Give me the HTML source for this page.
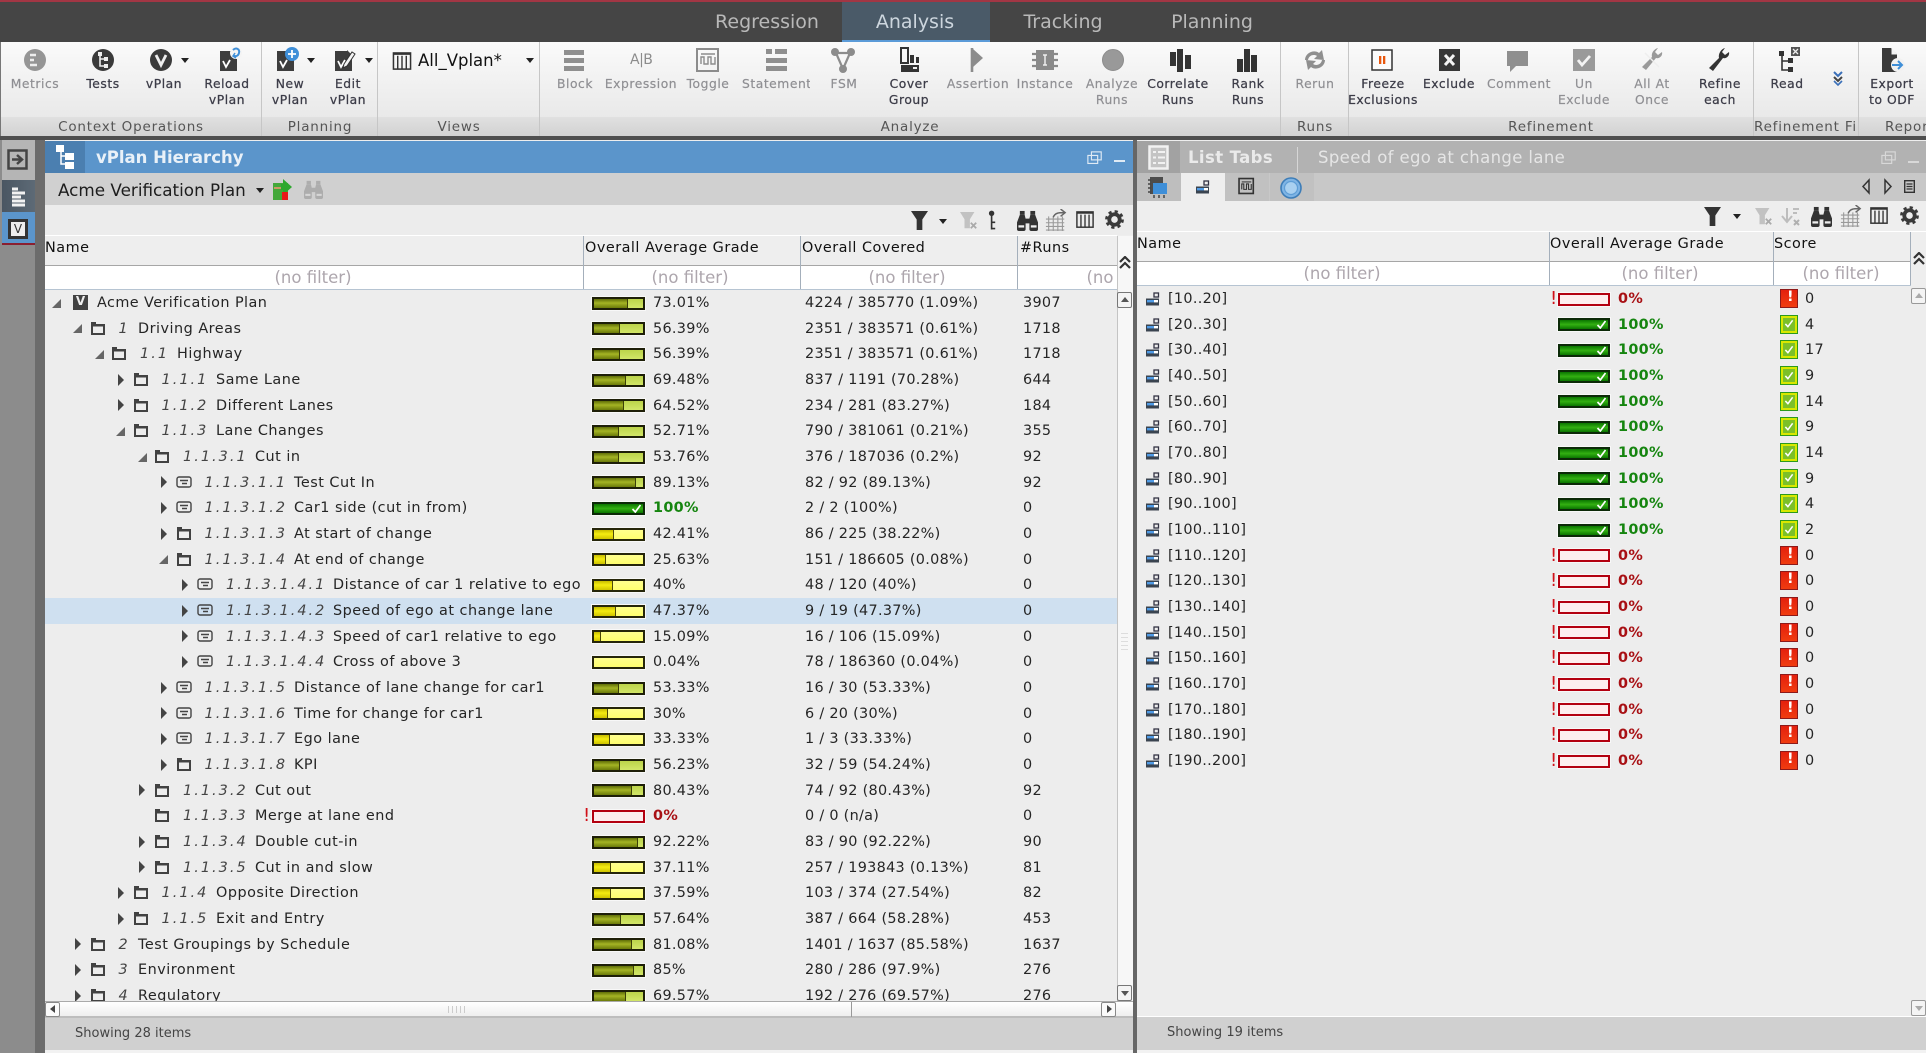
<!DOCTYPE html>
<html lang="en"><head><meta charset="utf-8"><title>vPlan Hierarchy</title>
<style>
html,body{margin:0;padding:0;width:1926px;height:1053px;overflow:hidden;background:#eee}
body{position:relative;font-family:"DejaVu Sans","Liberation Sans",sans-serif;color:#222}
div,span,p,em,b,i,svg{position:absolute}
p{margin:0}
svg{overflow:visible}
#app{left:0;top:0;width:1926px;height:1053px;overflow:hidden;filter:blur(.35px)}
.tab{top:1px;height:42px;line-height:42px;font-size:19px;color:#b9b9b9;transform:translateX(-50%);white-space:nowrap}
.t{top:76px;font-size:12.3px;letter-spacing:.55px;line-height:16.3px;color:#3c3c48;text-align:center;transform:translateX(-50%);white-space:nowrap;font-weight:400;-webkit-text-stroke:.25px #3c3c48}
.g{color:#8f8f93;-webkit-text-stroke:.2px #8f8f93}
.lb{top:118px;height:19px;line-height:19px;font-size:13.5px;letter-spacing:.8px;color:#555;white-space:nowrap;transform:translateX(-50%)}
.sp{top:42px;width:1px;height:94px;background:#c6c6c6}
.ic{top:46px;width:28px;height:28px}
.car{width:0;height:0;border-left:4px solid transparent;border-right:4px solid transparent;border-top:5px solid #222}
.hd{font-size:14.4px;letter-spacing:.5px;color:#111;white-space:nowrap;line-height:20px}
.fl{font-size:16.5px;color:#ada6ad;white-space:nowrap;transform:translateX(-50%);line-height:22px}
.vl{width:1px;background:#a4afbb}
.r{left:0;width:1920px;height:25.67px;top:calc(var(--i)*25.67px);font-size:14.4px;letter-spacing:.3px;line-height:25.67px;white-space:nowrap;color:#252525}
.r span,.r em{top:1px}
.r em{left:calc(97px + var(--l)*21.5px);font-style:italic;color:#444;letter-spacing:2.05px}
.r .n{left:calc(99px + var(--l)*39px);letter-spacing:.5px}
.c{left:calc(53.5px + var(--l)*21.4px);top:6.5px;width:0;height:0;border-left:6px solid #444;border-top:6.5px solid transparent;border-bottom:6.5px solid transparent}
.x{left:calc(52px + var(--l)*21.4px);top:8.5px;width:0;height:0;border-right:9px solid #666;border-top:9px solid transparent}
.f{left:calc(68px + var(--l)*21.5px);top:5px;width:16px;height:15px}
.b{left:592px;top:6.5px;width:53px;height:13px;box-sizing:border-box;border:2px solid #1e1f08;background:linear-gradient(#bcd44a,#d2e668);box-shadow:0 0 0 1px #f8f8f8;overflow:hidden}
.b u{position:absolute;left:0;top:0;display:block;height:100%;box-sizing:border-box;border-right:1.5px solid #3b3f08;background:linear-gradient(#606e08,#a4b424 45%,#6b7a0a)}
.b.y{border-color:#26260a;background:linear-gradient(#ffff8e,#ffff70)}
.b.y u{border-right-color:#4b4808;background:linear-gradient(#c8bc00,#f4ec10 45%,#cfc400)}
.b.gr{background:linear-gradient(#0a7600,#33b012 50%,#0a7600);border-color:#0c2a08}
.b.rd{background:#fdeeee;border-color:#b30010}
.b svg{right:1px;top:-1px;width:11px;height:11px}
.pc{left:653px}.ct{left:805px}.ru{left:1023px}
.gt{color:#15850f;font-weight:700}.rt{color:#a81014;font-weight:700}
.r .ex{color:#d01018;font-weight:400;font-size:18px;top:0}
.b.rb{left:1558px;width:52px}
.sc{left:1780px;top:3px;width:18px;height:19px;box-sizing:border-box}
.sr{background:linear-gradient(#e4200e,#f03c10);border:1.5px solid #8d1a1a}
.sg{background:#d8e800;border:1.5px solid #2c9a1c}
.sg:after{content:"";position:absolute;left:2px;top:2px;right:2px;bottom:2px;background:#7cc028}
.sc svg{left:2.5px;top:2.5px;width:10px;height:11px;z-index:2}
</style></head><body>
<svg width="0" height="0" style="position:absolute;left:0;top:0">
<defs>
<symbol id="fo" viewBox="0 0 16 15"><path d="M1 3V1h5v2h9v11H1z M3 5.5v6.5h10V5.5z" fill="#424242" fill-rule="evenodd"/></symbol>
<symbol id="te" viewBox="0 0 16 15"><rect x="1" y="2" width="14" height="10" rx="2" fill="none" stroke="#444" stroke-width="1.4"/><path d="M4 5.5h8M6 8.5h5" stroke="#444" stroke-width="1.4"/></symbol>
<symbol id="ck" viewBox="0 0 11 11"><path d="M1.5 6l2.8 3L9.5 2" fill="none" stroke="#fff" stroke-width="1.7"/></symbol>
<symbol id="rg" viewBox="0 0 14 14"><rect x="8" y="1" width="4.5" height="4" fill="none" stroke="#334" stroke-width="1.3"/><rect x="0" y="6.5" width="13" height="7" fill="#3a4450"/><rect x="1" y="8" width="7" height="2.4" fill="#4f9be6"/><rect x="8" y="8" width="4" height="2.4" fill="#fff"/></symbol>
<symbol id="fun" viewBox="0 0 18 20"><path d="M0 0h18l-6 9v11H6V9z" fill="#333"/></symbol>
<symbol id="funx" viewBox="0 0 20 20"><path d="M0 0h16l-5 8v10H5V8z" fill="#c2c2c2"/><path d="M12 12l6 6M18 12l-6 6" stroke="#aaa" stroke-width="2"/></symbol>
<symbol id="pin" viewBox="0 0 10 22"><circle cx="4" cy="3" r="3" fill="#333"/><path d="M4 3v18M4 13h4M4 20h4" stroke="#333" stroke-width="1.8" fill="none"/></symbol>
<symbol id="bin" viewBox="0 0 22 22"><rect x="3" y="1" width="5" height="4" fill="#333"/><rect x="14" y="1" width="5" height="4" fill="#333"/><path d="M3 5h5l1 4v11a2 2 0 0 1-2 2H2a2 2 0 0 1-2-2v-7zM14 5h5l3 8v7a2 2 0 0 1-2 2h-5a2 2 0 0 1-2-2V9zM9 9h4v5H9z" fill="#333"/><rect x="1.500" y="16" width="6" height="2.400" fill="#eee"/><rect x="14.500" y="16" width="6" height="2.400" fill="#eee"/></symbol>
<symbol id="grd" viewBox="0 0 24 24"><path d="M4 8v16M9 8v16M14 8v16M19 8v16M1 11h20M1 15h20M1 19h20M1 23h20" stroke="#9a9a9a" stroke-width="1.2" fill="none"/><path d="M9 9c2-5 6-5 12-5M17 0l5 4-5 4" stroke="#666" stroke-width="1.6" fill="none"/></symbol>
<symbol id="col" viewBox="0 0 20 20"><rect x="1" y="1" width="18" height="17" fill="none" stroke="#333" stroke-width="1.6"/><path d="M1 2h18" stroke="#333" stroke-width="2"/><path d="M5.500 4v14M10 4v14M14.500 4v14" stroke="#333" stroke-width="1.500"/></symbol>
<symbol id="gear" viewBox="0 0 20 20"><circle cx="10" cy="10" r="5.500" fill="none" stroke="#3a3a3a" stroke-width="4"/><circle cx="10" cy="10" r="8.300" fill="none" stroke="#3a3a3a" stroke-width="3.200" stroke-dasharray="3.300 3.200"/></symbol>
<symbol id="win" viewBox="0 0 18 18"><rect x="5" y="1" width="11" height="9" fill="none" stroke="currentColor" stroke-width="1.300"/><rect x="1" y="5" width="11" height="9" fill="none" stroke="currentColor" stroke-width="1.300"/></symbol>
<symbol id="dbl" viewBox="0 0 12 14"><path d="M1 6l5-5 5 5M1 12l5-5 5 5" fill="none" stroke="#333" stroke-width="2.200"/></symbol>
<symbol id="doc" viewBox="0 0 28 28"><path d="M5 5h12v-1l5 5v16H5z" fill="#3d3d3d"/><path d="M8 15l3 6 4-7" fill="none" stroke="#fff" stroke-width="1.800"/></symbol>
</defs></svg>
<div id="app">
<!-- top bar -->
<div style="left:0;top:0;width:1926px;height:42px;background:#454545"></div>
<div style="left:0;top:0;width:1926px;height:2px;background:#a23644"></div>
<div style="left:842px;top:2px;width:148px;height:38px;background:#4a5a68"></div>
<div style="left:842px;top:40px;width:148px;height:2px;background:#5b9bd8"></div>
<span class="tab" style="left:767px">Regression</span>
<span class="tab" style="left:915px;color:#cdd6de">Analysis</span>
<span class="tab" style="left:1063px">Tracking</span>
<span class="tab" style="left:1212px">Planning</span>
<!-- ribbon -->
<div style="left:0;top:42px;width:1926px;height:75px;background:linear-gradient(#fafafa,#e9e9e9)"></div>
<div style="left:0;top:117px;width:1926px;height:19px;background:linear-gradient(#e0e0e0,#d2d2d2)"></div>
<div style="left:0;top:136px;width:1926px;height:4px;background:#4f4f4f"></div>
<div style="left:0;top:42px;width:1px;height:94px;background:#777"></div>
<div class="sp" style="left:261px"></div><div class="sp" style="left:377px"></div><div class="sp" style="left:539px"></div><div class="sp" style="left:1280px"></div><div class="sp" style="left:1348px"></div><div class="sp" style="left:1753px"></div><div class="sp" style="left:1858px"></div>
<!-- ribbon icons -->
<svg class="ic" style="left:21px" viewBox="0 0 28 28"><circle cx="14" cy="14" r="11" fill="#959595"/><path d="M9 9h6M9 14h4M9 19h7" stroke="#eee" stroke-width="2.600"/></svg>
<svg class="ic" style="left:89px" viewBox="0 0 28 28"><circle cx="14" cy="14" r="11" fill="#3a3a3a"/><path d="M11 7v13h7M11 13h7" fill="none" stroke="#eee" stroke-width="1.600"/><rect x="9" y="6" width="4" height="4" fill="#eee"/><rect x="15" y="11" width="4" height="4" fill="#eee"/><rect x="15" y="18" width="4" height="4" fill="#eee"/></svg>
<svg class="ic" style="left:147px" viewBox="0 0 28 28"><circle cx="14" cy="14" r="11" fill="#3a3a3a"/><path d="M9 9l5 10 5-10" fill="none" stroke="#eee" stroke-width="2.800"/></svg>
<div class="car" style="left:181px;top:58px"></div>
<svg class="ic" style="left:215px" viewBox="0 0 28 28"><use href="#doc"/><circle cx="21" cy="7" r="6" fill="#f4f4f4"/><path d="M18 4c3-3 7-1 6 3s-4 3-5 3" fill="none" stroke="#3f8fd8" stroke-width="2"/><path d="M20 7l-2 3 3 2" fill="none" stroke="#3f8fd8" stroke-width="1.500"/></svg>
<svg class="ic" style="left:272px" viewBox="0 0 28 28"><use href="#doc"/><circle cx="20" cy="8" r="7" fill="#3f8fd8"/><path d="M20 4v8M16 8h8" stroke="#fff" stroke-width="1.800"/></svg>
<div class="car" style="left:307px;top:58px"></div>
<svg class="ic" style="left:330px" viewBox="0 0 28 28"><use href="#doc"/><path d="M14 18l8-12 3 2-8 12-4 2z" fill="#f4f4f4" stroke="#333" stroke-width="1"/></svg>
<div class="car" style="left:365px;top:58px"></div>
<svg style="left:392px;top:52px;width:20px;height:19px" viewBox="0 0 20 20"><use href="#col"/></svg>
<span style="left:418px;top:50px;font-size:16.5px;line-height:22px;color:#111;white-space:nowrap">All_Vplan*</span>
<div class="car" style="left:526px;top:58px"></div>
<svg class="ic" style="left:560px" viewBox="0 0 28 28"><path d="M4 4h20v5H4zM4 12h20v5H4zM4 20h20v5H4z" fill="#8f8f8f"/></svg>
<span style="left:630px;top:51px;font-size:14px;color:#8c8c8c;line-height:18px;white-space:nowrap;letter-spacing:-.5px">A|B</span>
<svg class="ic" style="left:694px" viewBox="0 0 28 28"><rect x="3" y="3" width="21" height="22" fill="none" stroke="#8c8c8c" stroke-width="2"/><path d="M7 8h14" stroke="#8c8c8c" stroke-width="1.500"/><path d="M7 18v-7h3v7h4v-7h3v7h4v-7" fill="none" stroke="#8c8c8c" stroke-width="1.400"/></svg>
<svg class="ic" style="left:762px" viewBox="0 0 28 28"><path d="M4 3h6v5H4zM13 3h12v5H13zM4 12h21v5H4zM4 20h21v5H4z" fill="#8f8f8f"/></svg>
<svg class="ic" style="left:829px" viewBox="0 0 28 28"><path d="M7 7l7 16 7-16M7 7h14" fill="none" stroke="#8c8c8c" stroke-width="2.200"/><circle cx="6" cy="6" r="4" fill="#8c8c8c"/><circle cx="22" cy="6" r="4" fill="#8c8c8c"/><circle cx="14" cy="23" r="4" fill="#8c8c8c"/></svg>
<svg class="ic" style="left:896px" viewBox="0 0 28 28"><path d="M5 2h7v15H5z" fill="none" stroke="#333" stroke-width="2"/><path d="M14 9h4v8h-4zM20 11h3v6h-3z" fill="#333"/><rect x="5" y="19" width="18" height="7" fill="#333"/><rect x="17" y="21" width="4" height="2" fill="#eee"/></svg>
<svg class="ic" style="left:964px" viewBox="0 0 28 28"><path d="M8 2v24" stroke="#8c8c8c" stroke-width="2.600"/><path d="M9 3l10 9-10 9z" fill="#8c8c8c"/></svg>
<svg class="ic" style="left:1031px" viewBox="0 0 28 28"><rect x="5" y="4" width="18" height="20" fill="#8a8a8a"/><path d="M1 8h5M1 14h5M1 20h5M22 8h5M22 14h5M22 20h5" stroke="#8a8a8a" stroke-width="2.200"/><path d="M12 9h4M14 9v10M12 19h4" stroke="#eee" stroke-width="1.500"/></svg>
<svg class="ic" style="left:1099px" viewBox="0 0 28 28"><circle cx="14" cy="14" r="10.500" fill="#999" stroke="#8c8c8c"/></svg>
<svg class="ic" style="left:1166px" viewBox="0 0 28 28"><path d="M4 6h6v14H4zM11 3h6v23h-6zM19 9h6v14h-6z" fill="#333"/></svg>
<svg class="ic" style="left:1233px" viewBox="0 0 28 28"><path d="M4 13h6v13H4zM11 3h6v23h-6zM18 9h6v17h-6z" fill="#333"/></svg>
<svg class="ic" style="left:1301px" viewBox="0 0 28 28"><path d="M4 14c0-7 9-11 14-7l3-3 2 10-10-1 3-3c-3-2-8-1-9 4zM24 14c0 7-9 11-14 7l-3 3-2-10 10 1-3 3c3 2 8 1 9-4z" fill="#8f8f8f"/></svg>
<svg class="ic" style="left:1368px" viewBox="0 0 28 28"><rect x="4" y="4" width="20" height="20" fill="#fbfbfb" stroke="#333" stroke-width="1.500"/><path d="M11 10h2.300v8H11zM15 10h2.300v8H15z" fill="#e8560c"/></svg>
<svg class="ic" style="left:1435px" viewBox="0 0 28 28"><rect x="4" y="3" width="21" height="22" fill="#383838"/><path d="M10 9l9 10M19 9l-9 10" stroke="#f4f4f4" stroke-width="3"/></svg>
<svg class="ic" style="left:1503px" viewBox="0 0 28 28"><path d="M4 5h21v15H13l-6 6v-6H4z" fill="#8f8f8f"/></svg>
<svg class="ic" style="left:1570px" viewBox="0 0 28 28"><rect x="3" y="3" width="22" height="22" fill="#9a9a9a"/><path d="M8 14l4 5 8-9" fill="none" stroke="#f4f4f4" stroke-width="2.800"/></svg>
<svg class="ic" style="left:1638px" viewBox="0 0 28 28"><path d="M20 2l-3 4 3 3 4-3c1 4-3 7-6 6L8 24l-4-3 10-10c-1-4 2-8 6-9z" fill="#9a9a9a"/><path d="M7 7l14 14" stroke="#eee" stroke-width="1.500"/></svg>
<svg class="ic" style="left:1705px" viewBox="0 0 28 28"><path d="M20 2l-3 4 3 3 4-3c1 4-3 7-6 6L8 25l-4-3 10-10c-1-4 2-9 6-10z" fill="#333"/></svg>
<svg class="ic" style="left:1774px" viewBox="0 0 28 28"><path d="M8 8v16h9M8 15h9" fill="none" stroke="#333" stroke-width="1.600"/><rect x="5" y="5" width="5" height="5" fill="#333"/><rect x="14" y="12" width="5" height="5" fill="#333"/><rect x="14" y="21" width="5" height="5" fill="#333"/><rect x="17" y="1" width="9" height="9" fill="#555"/><path d="M19 3l5 5M24 3l-5 5" stroke="#eee" stroke-width="1.300"/></svg>
<svg style="left:1832px;top:71px;width:12px;height:15px" viewBox="0 0 12 15"><path d="M2 1l4 4 4-4" fill="none" stroke="#3a6fb8" stroke-width="2"/><path d="M2 6l4 4 4-4" fill="none" stroke="#444" stroke-width="2"/><path d="M2 10l4 4 4-4" fill="none" stroke="#3a6fb8" stroke-width="1.600"/></svg>
<svg class="ic" style="left:1877px" viewBox="0 0 28 28"><path d="M5 2h9l6 6v18H5z" fill="#3a3a3a"/><path d="M15 2v6h5" fill="#f4f4f4" stroke="#f4f4f4"/><circle cx="21" cy="19" r="7" fill="#f2f2f2"/><path d="M15 19h10M21 15l4 4-4 4" fill="none" stroke="#3f8fd8" stroke-width="2"/></svg>
<!-- ribbon labels -->
<p class="t g" style="left:35px">Metrics</p><p class="t" style="left:103px">Tests</p><p class="t" style="left:164px">vPlan</p><p class="t" style="left:227px">Reload<br>vPlan</p><p class="t" style="left:290px">New<br>vPlan</p><p class="t" style="left:348px">Edit<br>vPlan</p>
<p class="t g" style="left:575px">Block</p><p class="t g" style="left:641px">Expression</p><p class="t g" style="left:708px">Toggle</p><p class="t g" style="left:776px;width:68px;overflow:hidden;text-align:left">Statement</p><p class="t g" style="left:844px">FSM</p><p class="t" style="left:909px">Cover<br>Group</p><p class="t g" style="left:978px">Assertion</p><p class="t g" style="left:1045px">Instance</p><p class="t g" style="left:1112px">Analyze<br>Runs</p><p class="t" style="left:1178px">Correlate<br>Runs</p><p class="t" style="left:1248px">Rank<br>Runs</p>
<p class="t g" style="left:1315px">Rerun</p><p class="t" style="left:1383px">Freeze<br>Exclusions</p><p class="t" style="left:1449px">Exclude</p><p class="t g" style="left:1519px">Comment</p><p class="t g" style="left:1584px">Un<br>Exclude</p><p class="t g" style="left:1652px">All At<br>Once</p><p class="t" style="left:1720px">Refine<br>each</p><p class="t" style="left:1787px">Read</p><p class="t" style="left:1892px">Export<br>to ODF</p>
<span class="lb" style="left:131px">Context Operations</span><span class="lb" style="left:320px">Planning</span><span class="lb" style="left:459px">Views</span><span class="lb" style="left:910px">Analyze</span><span class="lb" style="left:1315px">Runs</span><span class="lb" style="left:1551px">Refinement</span>
<div style="left:1754px;top:117px;width:104px;height:20px;overflow:hidden"><span class="lb" style="left:0;top:1px;transform:none">Refinement Filter</span></div>
<div style="left:1885px;top:117px;width:41px;height:20px;overflow:hidden"><span class="lb" style="left:0;top:1px;transform:none">Report</span></div>
<!-- sidebar -->
<div style="left:0;top:140px;width:35px;height:913px;background:#8c8c8c"></div>
<div style="left:35px;top:140px;width:10px;height:913px;background:#6c6c6c"></div>
<div style="left:2px;top:140px;width:33px;height:40px;background:#b5b5b5"></div>
<div style="left:2px;top:180px;width:33px;height:32px;background:linear-gradient(90deg,#4a5662,#5d6a76)"></div>
<div style="left:2px;top:212px;width:33px;height:31px;background:#5b95cb"></div>
<div style="left:2px;top:243px;width:33px;height:2px;background:#8b1f30"></div>
<svg style="left:7px;top:149px;width:21px;height:21px" viewBox="0 0 21 21"><rect x="1.500" y="1.500" width="18" height="18" fill="none" stroke="#444" stroke-width="2.500"/><path d="M5 10.500h9M10 6l5 4.500-5 4.500" fill="none" stroke="#444" stroke-width="2.500"/></svg>
<svg style="left:11px;top:188px;width:15px;height:19px" viewBox="0 0 15 19"><path d="M1 1h6M1 5h13M1 9h9M1 13h13M1 17h13" stroke="#f2f2f2" stroke-width="3"/></svg>
<div style="left:8px;top:219px;width:20px;height:20px;box-sizing:border-box;border:3px solid #333;background:#eee;color:#333;font-size:12px;line-height:14px;text-align:center">V</div>
<!-- left panel -->
<div style="left:45px;top:141px;width:1088px;height:32px;background:#5b95cb"></div>
<div style="left:45px;top:141px;width:40px;height:32px;background:#4b7fb0"></div>
<svg style="left:55px;top:145px;width:20px;height:24px" viewBox="0 0 20 24"><path d="M6 3v16h8M6 11h8" fill="none" stroke="#fff" stroke-width="1.500"/><rect x="1" y="0" width="8" height="7" fill="#fff"/><rect x="10" y="8" width="9" height="7" fill="#fff"/><rect x="10" y="17" width="9" height="7" fill="#fff"/></svg>
<span style="left:96px;top:146px;font-size:16.5px;font-weight:700;color:#e9f1f8;line-height:24px;white-space:nowrap">vPlan Hierarchy</span>
<svg style="left:1087px;top:151px;width:16px;height:16px;color:#dfeaf4"><use href="#win"/></svg>
<div style="left:1114px;top:160px;width:11px;height:2px;background:#dfeaf4"></div>
<div style="left:45px;top:173px;width:1088px;height:32px;background:#d0d0d0"></div>
<span style="left:58px;top:178px;font-size:16.8px;color:#1d1d1d;line-height:24px;white-space:nowrap">Acme Verification Plan</span>
<div class="car" style="left:256px;top:188px"></div>
<svg style="left:273px;top:179px;width:19px;height:21px" viewBox="0 0 19 21"><rect x="0" y="4" width="15" height="17" fill="#43a83a"/><path d="M8 9h-6M10 0l9 8-9 8V11H8V5h2z" fill="#2ea82e"/><path d="M9 21V13l6 0v8z" fill="#e81818"/><path d="M1 9h7" stroke="#c96" stroke-width="2"/></svg>
<svg style="left:303px;top:180px;width:21px;height:19px;opacity:.22" viewBox="0 0 22 22"><use href="#bin"/></svg>
<div style="left:45px;top:205px;width:1088px;height:30px;background:#ececec"></div>
<svg style="left:911px;top:211px;width:17px;height:19px"><use href="#fun"/></svg>
<div class="car" style="left:939px;top:219px"></div>
<svg style="left:960px;top:212px;width:18px;height:18px"><use href="#funx"/></svg>
<svg style="left:988px;top:210px;width:9px;height:21px"><use href="#pin"/></svg>
<svg style="left:1017px;top:210px;width:21px;height:21px"><use href="#bin"/></svg>
<svg style="left:1045px;top:209px;width:22px;height:22px"><use href="#grd"/></svg>
<svg style="left:1076px;top:211px;width:18px;height:18px"><use href="#col"/></svg>
<svg style="left:1105px;top:210px;width:19px;height:19px"><use href="#gear"/></svg>
<div style="left:45px;top:235px;width:1072px;height:1px;background:#fff"></div>
<div style="left:45px;top:236px;width:1072px;height:29px;background:#eee"></div>
<div style="left:45px;top:265px;width:1072px;height:1px;background:#a6a6a6"></div>
<div style="left:45px;top:266px;width:1072px;height:23px;background:#fff"></div>
<div style="left:45px;top:289px;width:1072px;height:1px;background:#b6c4d2"></div>
<div class="vl" style="left:583px;top:236px;height:53px"></div><div class="vl" style="left:800px;top:236px;height:53px"></div><div class="vl" style="left:1017px;top:236px;height:53px"></div>
<span class="hd" style="left:45px;top:238px">Name</span><span class="hd" style="left:585px;top:238px">Overall Average Grade</span><span class="hd" style="left:802px;top:238px">Overall Covered</span><span class="hd" style="left:1020px;top:238px">#Runs</span>
<span class="fl" style="left:313px;top:267px">(no filter)</span><span class="fl" style="left:690px;top:267px">(no filter)</span><span class="fl" style="left:907px;top:267px">(no filter)</span>
<div style="left:1018px;top:266px;width:99px;height:23px;overflow:hidden"><span class="fl" style="left:107px;top:1px">(no filter)</span></div>
<div style="left:45px;top:290px;width:1072px;height:712px;background:#ededed"></div>
<div style="left:45px;top:598px;width:1072px;height:25.67px;background:#cfe0f0"></div>
<div style="left:0;top:290px;width:1117px;height:712px;overflow:hidden">
<div class="r" style="--i:0;--l:0"><b class="x"></b><svg style="left:73px;top:5px;width:15px;height:15px" viewBox="0 0 15 15"><rect width="15" height="15" fill="#424242"/></svg><span style="left:75px;width:11px;text-align:center;color:#eee;font-weight:700;font-size:12px;letter-spacing:0;top:-1px">V</span><span style="left:97px;letter-spacing:.42px">Acme Verification Plan</span><i class="b"><u style="width:70%"></u></i><span class="pc">73.01%</span><span class="ct">4224 / 385770 (1.09%)</span><span class="ru">3907</span></div>
<div class="r" style="--i:1;--l:1"><b class="x"></b><svg class="f"><use href="#fo"/></svg><em>1</em><span class="n">Driving Areas</span><i class="b"><u style="width:53%"></u></i><span class="pc">56.39%</span><span class="ct">2351 / 383571 (0.61%)</span><span class="ru">1718</span></div>
<div class="r" style="--i:2;--l:2"><b class="x"></b><svg class="f"><use href="#fo"/></svg><em>1.1</em><span class="n">Highway</span><i class="b"><u style="width:53%"></u></i><span class="pc">56.39%</span><span class="ct">2351 / 383571 (0.61%)</span><span class="ru">1718</span></div>
<div class="r" style="--i:3;--l:3"><b class="c"></b><svg class="f"><use href="#fo"/></svg><em>1.1.1</em><span class="n">Same Lane</span><i class="b"><u style="width:66%"></u></i><span class="pc">69.48%</span><span class="ct">837 / 1191 (70.28%)</span><span class="ru">644</span></div>
<div class="r" style="--i:4;--l:3"><b class="c"></b><svg class="f"><use href="#fo"/></svg><em>1.1.2</em><span class="n">Different Lanes</span><i class="b"><u style="width:61%"></u></i><span class="pc">64.52%</span><span class="ct">234 / 281 (83.27%)</span><span class="ru">184</span></div>
<div class="r" style="--i:5;--l:3"><b class="x"></b><svg class="f"><use href="#fo"/></svg><em>1.1.3</em><span class="n">Lane Changes</span><i class="b"><u style="width:50%"></u></i><span class="pc">52.71%</span><span class="ct">790 / 381061 (0.21%)</span><span class="ru">355</span></div>
<div class="r" style="--i:6;--l:4"><b class="x"></b><svg class="f"><use href="#fo"/></svg><em>1.1.3.1</em><span class="n">Cut in</span><i class="b"><u style="width:51%"></u></i><span class="pc">53.76%</span><span class="ct">376 / 187036 (0.2%)</span><span class="ru">92</span></div>
<div class="r" style="--i:7;--l:5"><b class="c"></b><svg class="f"><use href="#te"/></svg><em>1.1.3.1.1</em><span class="n">Test Cut In</span><i class="b"><u style="width:85%"></u></i><span class="pc">89.13%</span><span class="ct">82 / 92 (89.13%)</span><span class="ru">92</span></div>
<div class="r" style="--i:8;--l:5"><b class="c"></b><svg class="f"><use href="#te"/></svg><em>1.1.3.1.2</em><span class="n">Car1 side (cut in from)</span><i class="b gr"><svg><use href="#ck"/></svg></i><span class="pc gt">100%</span><span class="ct">2 / 2 (100%)</span><span class="ru">0</span></div>
<div class="r" style="--i:9;--l:5"><b class="c"></b><svg class="f"><use href="#fo"/></svg><em>1.1.3.1.3</em><span class="n">At start of change</span><i class="b y"><u style="width:40%"></u></i><span class="pc">42.41%</span><span class="ct">86 / 225 (38.22%)</span><span class="ru">0</span></div>
<div class="r" style="--i:10;--l:5"><b class="x"></b><svg class="f"><use href="#fo"/></svg><em>1.1.3.1.4</em><span class="n">At end of change</span><i class="b y"><u style="width:24%"></u></i><span class="pc">25.63%</span><span class="ct">151 / 186605 (0.08%)</span><span class="ru">0</span></div>
<div class="r" style="--i:11;--l:6"><b class="c"></b><svg class="f"><use href="#te"/></svg><em>1.1.3.1.4.1</em><span class="n">Distance of car 1 relative to ego</span><i class="b y"><u style="width:38%"></u></i><span class="pc">40%</span><span class="ct">48 / 120 (40%)</span><span class="ru">0</span></div>
<div class="r" style="--i:12;--l:6"><b class="c"></b><svg class="f"><use href="#te"/></svg><em>1.1.3.1.4.2</em><span class="n">Speed of ego at change lane</span><i class="b y"><u style="width:45%"></u></i><span class="pc">47.37%</span><span class="ct">9 / 19 (47.37%)</span><span class="ru">0</span></div>
<div class="r" style="--i:13;--l:6"><b class="c"></b><svg class="f"><use href="#te"/></svg><em>1.1.3.1.4.3</em><span class="n">Speed of car1 relative to ego</span><i class="b y"><u style="width:14%"></u></i><span class="pc">15.09%</span><span class="ct">16 / 106 (15.09%)</span><span class="ru">0</span></div>
<div class="r" style="--i:14;--l:6"><b class="c"></b><svg class="f"><use href="#te"/></svg><em>1.1.3.1.4.4</em><span class="n">Cross of above 3</span><i class="b y"></i><span class="pc">0.04%</span><span class="ct">78 / 186360 (0.04%)</span><span class="ru">0</span></div>
<div class="r" style="--i:15;--l:5"><b class="c"></b><svg class="f"><use href="#te"/></svg><em>1.1.3.1.5</em><span class="n">Distance of lane change for car1</span><i class="b"><u style="width:51%"></u></i><span class="pc">53.33%</span><span class="ct">16 / 30 (53.33%)</span><span class="ru">0</span></div>
<div class="r" style="--i:16;--l:5"><b class="c"></b><svg class="f"><use href="#te"/></svg><em>1.1.3.1.6</em><span class="n">Time for change for car1</span><i class="b y"><u style="width:28%"></u></i><span class="pc">30%</span><span class="ct">6 / 20 (30%)</span><span class="ru">0</span></div>
<div class="r" style="--i:17;--l:5"><b class="c"></b><svg class="f"><use href="#te"/></svg><em>1.1.3.1.7</em><span class="n">Ego lane</span><i class="b y"><u style="width:32%"></u></i><span class="pc">33.33%</span><span class="ct">1 / 3 (33.33%)</span><span class="ru">0</span></div>
<div class="r" style="--i:18;--l:5"><b class="c"></b><svg class="f"><use href="#fo"/></svg><em>1.1.3.1.8</em><span class="n">KPI</span><i class="b"><u style="width:54%"></u></i><span class="pc">56.23%</span><span class="ct">32 / 59 (54.24%)</span><span class="ru">0</span></div>
<div class="r" style="--i:19;--l:4"><b class="c"></b><svg class="f"><use href="#fo"/></svg><em>1.1.3.2</em><span class="n">Cut out</span><i class="b"><u style="width:77%"></u></i><span class="pc">80.43%</span><span class="ct">74 / 92 (80.43%)</span><span class="ru">92</span></div>
<div class="r" style="--i:20;--l:4"><svg class="f"><use href="#fo"/></svg><em>1.1.3.3</em><span class="n">Merge at lane end</span><span class="ex" style="left:583px">!</span><i class="b rd"></i><span class="pc rt">0%</span><span class="ct">0 / 0 (n/a)</span><span class="ru">0</span></div>
<div class="r" style="--i:21;--l:4"><b class="c"></b><svg class="f"><use href="#fo"/></svg><em>1.1.3.4</em><span class="n">Double cut-in</span><i class="b"><u style="width:90%"></u></i><span class="pc">92.22%</span><span class="ct">83 / 90 (92.22%)</span><span class="ru">90</span></div>
<div class="r" style="--i:22;--l:4"><b class="c"></b><svg class="f"><use href="#fo"/></svg><em>1.1.3.5</em><span class="n">Cut in and slow</span><i class="b y"><u style="width:35%"></u></i><span class="pc">37.11%</span><span class="ct">257 / 193843 (0.13%)</span><span class="ru">81</span></div>
<div class="r" style="--i:23;--l:3"><b class="c"></b><svg class="f"><use href="#fo"/></svg><em>1.1.4</em><span class="n">Opposite Direction</span><i class="b y"><u style="width:35%"></u></i><span class="pc">37.59%</span><span class="ct">103 / 374 (27.54%)</span><span class="ru">82</span></div>
<div class="r" style="--i:24;--l:3"><b class="c"></b><svg class="f"><use href="#fo"/></svg><em>1.1.5</em><span class="n">Exit and Entry</span><i class="b"><u style="width:55%"></u></i><span class="pc">57.64%</span><span class="ct">387 / 664 (58.28%)</span><span class="ru">453</span></div>
<div class="r" style="--i:25;--l:1"><b class="c"></b><svg class="f"><use href="#fo"/></svg><em>2</em><span class="n">Test Groupings by Schedule</span><i class="b"><u style="width:77%"></u></i><span class="pc">81.08%</span><span class="ct">1401 / 1637 (85.58%)</span><span class="ru">1637</span></div>
<div class="r" style="--i:26;--l:1"><b class="c"></b><svg class="f"><use href="#fo"/></svg><em>3</em><span class="n">Environment</span><i class="b"><u style="width:82%"></u></i><span class="pc">85%</span><span class="ct">280 / 286 (97.9%)</span><span class="ru">276</span></div>
<div class="r" style="--i:27;--l:1"><b class="c"></b><svg class="f"><use href="#fo"/></svg><em>4</em><span class="n">Regulatory</span><i class="b"><u style="width:66%"></u></i><span class="pc">69.57%</span><span class="ct">192 / 276 (69.57%)</span><span class="ru">276</span></div>
</div>
<!-- left scrollbars -->
<div style="left:1117px;top:236px;width:16px;height:781px;background:#f7f7f7;border-left:1px solid #c4c4c4;box-sizing:border-box"></div>
<svg style="left:1119px;top:256px;width:12px;height:14px"><use href="#dbl"/></svg>
<div style="left:1117px;top:292px;width:15px;height:16px;background:#f4f4f4;border:1px solid #777;border-radius:2px;box-sizing:border-box"></div>
<div style="left:1121px;top:297px;width:0;height:0;border-left:4px solid transparent;border-right:4px solid transparent;border-bottom:5px solid #555"></div>
<div style="left:1117px;top:985px;width:15px;height:16px;background:#f4f4f4;border:1px solid #777;border-radius:2px;box-sizing:border-box"></div>
<div style="left:1121px;top:991px;width:0;height:0;border-left:4px solid transparent;border-right:4px solid transparent;border-top:5px solid #555"></div>
<div style="left:1121px;top:633px;width:7px;height:20px;background:repeating-linear-gradient(#ddd 0 1px,#f7f7f7 1px 4px)"></div>
<div style="left:45px;top:1001px;width:1088px;height:1px;background:#aaa"></div>
<div style="left:45px;top:1002px;width:1088px;height:15px;background:linear-gradient(#fff,#ededed)"></div>
<div style="left:45px;top:1016px;width:1088px;height:2px;background:#bdbdbd"></div>
<div style="left:45px;top:1002px;width:15px;height:15px;background:#fafafa;border:1px solid #888;border-radius:2px;box-sizing:border-box"></div>
<div style="left:50px;top:1005px;width:0;height:0;border-top:4px solid transparent;border-bottom:4px solid transparent;border-right:5px solid #444"></div>
<div style="left:851px;top:1002px;width:1px;height:15px;background:#999"></div>
<div style="left:1101px;top:1002px;width:15px;height:15px;background:#fafafa;border:1px solid #888;border-radius:2px;box-sizing:border-box"></div>
<div style="left:1107px;top:1005px;width:0;height:0;border-top:4px solid transparent;border-bottom:4px solid transparent;border-left:5px solid #444"></div>
<div style="left:448px;top:1006px;width:18px;height:7px;background:repeating-linear-gradient(90deg,#ccc 0 1px,transparent 1px 4px)"></div>
<div style="left:45px;top:1018px;width:1088px;height:32px;background:#d0d0d0"></div>
<div style="left:45px;top:1050px;width:1088px;height:3px;background:#f2f2f2"></div>
<span style="left:75px;top:1024px;font-size:13px;color:#444;line-height:20px;white-space:nowrap">Showing 28 items</span>
<!-- divider -->
<div style="left:1133px;top:140px;width:4px;height:913px;background:#666"></div>
<!-- right panel -->
<div style="left:1137px;top:141px;width:789px;height:32px;background:#b2b2b2"></div>
<div style="left:1137px;top:141px;width:43px;height:32px;background:#a2a2a2"></div>
<svg style="left:1148px;top:145px;width:21px;height:25px" viewBox="0 0 21 25"><rect x="1.500" y="1.500" width="18" height="22" fill="#c4c4c4" stroke="#f2f2f2" stroke-width="2.500"/><path d="M5 7h3M10 7h7M5 12.500h3M10 12.500h7M5 18h3M10 18h7" stroke="#f2f2f2" stroke-width="2"/></svg>
<span style="left:1188px;top:146px;font-size:16.5px;font-weight:700;letter-spacing:.4px;color:#eaeaea;line-height:24px;white-space:nowrap">List Tabs</span>
<div style="left:1297px;top:147px;width:1px;height:26px;background:#d6d6d6"></div>
<span style="left:1318px;top:146px;font-size:16.5px;letter-spacing:.37px;color:#e6e6e6;line-height:24px;white-space:nowrap">Speed of ego at change lane</span>
<svg style="left:1881px;top:151px;width:16px;height:16px;color:#d8d8d8"><use href="#win"/></svg>
<div style="left:1908px;top:161px;width:11px;height:2px;background:#d8d8d8"></div>
<div style="left:1137px;top:173px;width:789px;height:28px;background:#c8c8c8"></div>
<div style="left:1137px;top:173px;width:44px;height:28px;background:#bebebe"></div>
<div style="left:1181px;top:173px;width:44px;height:28px;background:#eee"></div>
<div style="left:1225px;top:173px;width:44px;height:28px;background:#c1c1c1"></div>
<div style="left:1270px;top:173px;width:44px;height:28px;background:#c1c1c1"></div>
<svg style="left:1148px;top:177px;width:20px;height:21px" viewBox="0 0 20 21"><rect x="2" y="0" width="13" height="17" fill="#4c4c4c"/><rect x="5" y="6" width="14" height="11" fill="#3f8fd8"/><path d="M0 3h3M0 7h3M0 11h3M0 15h3M6 18v3M11 18v3M16 18v3" stroke="#444" stroke-width="1.500"/></svg>
<svg style="left:1196px;top:180px;width:14px;height:14px"><use href="#rg"/></svg>
<svg style="left:1237px;top:176px;width:19px;height:20px" viewBox="0 0 28 28"><rect x="3" y="3" width="21" height="22" fill="none" stroke="#333" stroke-width="2.400"/><path d="M7 8h14" stroke="#333" stroke-width="1.500"/><path d="M7 19v-8h3v8h4v-8h3v8h4v-8" fill="none" stroke="#333" stroke-width="1.600"/></svg>
<svg style="left:1280px;top:177px;width:22px;height:22px" viewBox="0 0 22 22"><circle cx="11" cy="11" r="10" fill="#7fb4e4" stroke="#3d7db8" stroke-width="1.600"/><circle cx="11" cy="11" r="6.500" fill="#a9d0f0" stroke="#5f9ed6" stroke-width="1.200"/></svg>
<svg style="left:1862px;top:179px;width:8px;height:15px" viewBox="0 0 8 15"><path d="M7 1L1 7.500 7 14z" fill="none" stroke="#333" stroke-width="1.500"/></svg>
<svg style="left:1884px;top:179px;width:8px;height:15px" viewBox="0 0 8 15"><path d="M1 1l6 6.500L1 14z" fill="none" stroke="#333" stroke-width="1.500"/></svg>
<svg style="left:1904px;top:180px;width:11px;height:13px" viewBox="0 0 11 13"><rect x=".7" y=".7" width="9.600" height="11.600" fill="none" stroke="#333" stroke-width="1.400"/><path d="M2.500 4h6M2.500 6.500h6M2.500 9h6" stroke="#333" stroke-width="1.200"/></svg>
<div style="left:1137px;top:201px;width:789px;height:30px;background:#eee"></div>
<svg style="left:1704px;top:207px;width:17px;height:19px"><use href="#fun"/></svg>
<div class="car" style="left:1733px;top:214px"></div>
<svg style="left:1755px;top:208px;width:18px;height:18px"><use href="#funx"/></svg>
<svg style="left:1781px;top:207px;width:20px;height:20px" viewBox="0 0 20 20"><path d="M6 1v13M1 9l5 6 5-6M12 2h6M12 6h4" fill="none" stroke="#bdbdbd" stroke-width="2"/><path d="M13 13l5 5M18 13l-5 5" stroke="#b0b0b0" stroke-width="2"/></svg>
<svg style="left:1811px;top:206px;width:21px;height:21px"><use href="#bin"/></svg>
<svg style="left:1840px;top:205px;width:22px;height:22px"><use href="#grd"/></svg>
<svg style="left:1870px;top:207px;width:18px;height:18px"><use href="#col"/></svg>
<svg style="left:1900px;top:206px;width:19px;height:19px"><use href="#gear"/></svg>
<div style="left:1137px;top:231px;width:789px;height:1px;background:#fff"></div>
<div style="left:1137px;top:232px;width:774px;height:29px;background:#eee"></div>
<div style="left:1137px;top:261px;width:774px;height:1px;background:#a6a6a6"></div>
<div style="left:1137px;top:262px;width:774px;height:23px;background:#fff"></div>
<div style="left:1137px;top:285px;width:774px;height:1px;background:#b6c4d2"></div>
<div class="vl" style="left:1549px;top:232px;height:53px"></div><div class="vl" style="left:1773px;top:232px;height:53px"></div><div class="vl" style="left:1910px;top:232px;height:53px"></div>
<span class="hd" style="left:1137px;top:234px">Name</span><span class="hd" style="left:1550px;top:234px">Overall Average Grade</span><span class="hd" style="left:1774px;top:234px">Score</span>
<span class="fl" style="left:1342px;top:263px">(no filter)</span><span class="fl" style="left:1660px;top:263px">(no filter)</span><span class="fl" style="left:1841px;top:263px">(no filter)</span>
<div style="left:1137px;top:286px;width:789px;height:731px;background:#ededed"></div>
<svg style="left:1913px;top:252px;width:12px;height:14px"><use href="#dbl"/></svg>
<div style="left:1911px;top:288px;width:15px;height:16px;background:#f4f4f4;border:1px solid #999;border-radius:2px;box-sizing:border-box"></div>
<div style="left:1915px;top:293px;width:0;height:0;border-left:4px solid transparent;border-right:4px solid transparent;border-bottom:5px solid #aaa"></div>
<div style="left:1911px;top:1000px;width:15px;height:16px;background:#f4f4f4;border:1px solid #999;border-radius:2px;box-sizing:border-box"></div>
<div style="left:1915px;top:1006px;width:0;height:0;border-left:4px solid transparent;border-right:4px solid transparent;border-top:5px solid #aaa"></div>
<div style="left:0;top:286px;width:1911px;height:500px">
<div class="r" style="--i:0"><svg style="left:1146px;top:6px;width:14px;height:14px"><use href="#rg"/></svg><span style="left:1168px">[10..20]</span><span class="ex" style="left:1550px">!</span><i class="b rd rb"></i><span class="rt" style="left:1618px">0%</span><b class="sc sr"></b><span style="left:1787px;color:#fff;font-weight:700;top:-1px">!</span><span style="left:1805px">0</span></div>
<div class="r" style="--i:1"><svg style="left:1146px;top:6px;width:14px;height:14px"><use href="#rg"/></svg><span style="left:1168px">[20..30]</span><i class="b gr rb"><svg><use href="#ck"/></svg></i><span class="gt" style="left:1618px">100%</span><b class="sc sg"><svg><use href="#ck"/></svg></b><span style="left:1805px">4</span></div>
<div class="r" style="--i:2"><svg style="left:1146px;top:6px;width:14px;height:14px"><use href="#rg"/></svg><span style="left:1168px">[30..40]</span><i class="b gr rb"><svg><use href="#ck"/></svg></i><span class="gt" style="left:1618px">100%</span><b class="sc sg"><svg><use href="#ck"/></svg></b><span style="left:1805px">17</span></div>
<div class="r" style="--i:3"><svg style="left:1146px;top:6px;width:14px;height:14px"><use href="#rg"/></svg><span style="left:1168px">[40..50]</span><i class="b gr rb"><svg><use href="#ck"/></svg></i><span class="gt" style="left:1618px">100%</span><b class="sc sg"><svg><use href="#ck"/></svg></b><span style="left:1805px">9</span></div>
<div class="r" style="--i:4"><svg style="left:1146px;top:6px;width:14px;height:14px"><use href="#rg"/></svg><span style="left:1168px">[50..60]</span><i class="b gr rb"><svg><use href="#ck"/></svg></i><span class="gt" style="left:1618px">100%</span><b class="sc sg"><svg><use href="#ck"/></svg></b><span style="left:1805px">14</span></div>
<div class="r" style="--i:5"><svg style="left:1146px;top:6px;width:14px;height:14px"><use href="#rg"/></svg><span style="left:1168px">[60..70]</span><i class="b gr rb"><svg><use href="#ck"/></svg></i><span class="gt" style="left:1618px">100%</span><b class="sc sg"><svg><use href="#ck"/></svg></b><span style="left:1805px">9</span></div>
<div class="r" style="--i:6"><svg style="left:1146px;top:6px;width:14px;height:14px"><use href="#rg"/></svg><span style="left:1168px">[70..80]</span><i class="b gr rb"><svg><use href="#ck"/></svg></i><span class="gt" style="left:1618px">100%</span><b class="sc sg"><svg><use href="#ck"/></svg></b><span style="left:1805px">14</span></div>
<div class="r" style="--i:7"><svg style="left:1146px;top:6px;width:14px;height:14px"><use href="#rg"/></svg><span style="left:1168px">[80..90]</span><i class="b gr rb"><svg><use href="#ck"/></svg></i><span class="gt" style="left:1618px">100%</span><b class="sc sg"><svg><use href="#ck"/></svg></b><span style="left:1805px">9</span></div>
<div class="r" style="--i:8"><svg style="left:1146px;top:6px;width:14px;height:14px"><use href="#rg"/></svg><span style="left:1168px">[90..100]</span><i class="b gr rb"><svg><use href="#ck"/></svg></i><span class="gt" style="left:1618px">100%</span><b class="sc sg"><svg><use href="#ck"/></svg></b><span style="left:1805px">4</span></div>
<div class="r" style="--i:9"><svg style="left:1146px;top:6px;width:14px;height:14px"><use href="#rg"/></svg><span style="left:1168px">[100..110]</span><i class="b gr rb"><svg><use href="#ck"/></svg></i><span class="gt" style="left:1618px">100%</span><b class="sc sg"><svg><use href="#ck"/></svg></b><span style="left:1805px">2</span></div>
<div class="r" style="--i:10"><svg style="left:1146px;top:6px;width:14px;height:14px"><use href="#rg"/></svg><span style="left:1168px">[110..120]</span><span class="ex" style="left:1550px">!</span><i class="b rd rb"></i><span class="rt" style="left:1618px">0%</span><b class="sc sr"></b><span style="left:1787px;color:#fff;font-weight:700;top:-1px">!</span><span style="left:1805px">0</span></div>
<div class="r" style="--i:11"><svg style="left:1146px;top:6px;width:14px;height:14px"><use href="#rg"/></svg><span style="left:1168px">[120..130]</span><span class="ex" style="left:1550px">!</span><i class="b rd rb"></i><span class="rt" style="left:1618px">0%</span><b class="sc sr"></b><span style="left:1787px;color:#fff;font-weight:700;top:-1px">!</span><span style="left:1805px">0</span></div>
<div class="r" style="--i:12"><svg style="left:1146px;top:6px;width:14px;height:14px"><use href="#rg"/></svg><span style="left:1168px">[130..140]</span><span class="ex" style="left:1550px">!</span><i class="b rd rb"></i><span class="rt" style="left:1618px">0%</span><b class="sc sr"></b><span style="left:1787px;color:#fff;font-weight:700;top:-1px">!</span><span style="left:1805px">0</span></div>
<div class="r" style="--i:13"><svg style="left:1146px;top:6px;width:14px;height:14px"><use href="#rg"/></svg><span style="left:1168px">[140..150]</span><span class="ex" style="left:1550px">!</span><i class="b rd rb"></i><span class="rt" style="left:1618px">0%</span><b class="sc sr"></b><span style="left:1787px;color:#fff;font-weight:700;top:-1px">!</span><span style="left:1805px">0</span></div>
<div class="r" style="--i:14"><svg style="left:1146px;top:6px;width:14px;height:14px"><use href="#rg"/></svg><span style="left:1168px">[150..160]</span><span class="ex" style="left:1550px">!</span><i class="b rd rb"></i><span class="rt" style="left:1618px">0%</span><b class="sc sr"></b><span style="left:1787px;color:#fff;font-weight:700;top:-1px">!</span><span style="left:1805px">0</span></div>
<div class="r" style="--i:15"><svg style="left:1146px;top:6px;width:14px;height:14px"><use href="#rg"/></svg><span style="left:1168px">[160..170]</span><span class="ex" style="left:1550px">!</span><i class="b rd rb"></i><span class="rt" style="left:1618px">0%</span><b class="sc sr"></b><span style="left:1787px;color:#fff;font-weight:700;top:-1px">!</span><span style="left:1805px">0</span></div>
<div class="r" style="--i:16"><svg style="left:1146px;top:6px;width:14px;height:14px"><use href="#rg"/></svg><span style="left:1168px">[170..180]</span><span class="ex" style="left:1550px">!</span><i class="b rd rb"></i><span class="rt" style="left:1618px">0%</span><b class="sc sr"></b><span style="left:1787px;color:#fff;font-weight:700;top:-1px">!</span><span style="left:1805px">0</span></div>
<div class="r" style="--i:17"><svg style="left:1146px;top:6px;width:14px;height:14px"><use href="#rg"/></svg><span style="left:1168px">[180..190]</span><span class="ex" style="left:1550px">!</span><i class="b rd rb"></i><span class="rt" style="left:1618px">0%</span><b class="sc sr"></b><span style="left:1787px;color:#fff;font-weight:700;top:-1px">!</span><span style="left:1805px">0</span></div>
<div class="r" style="--i:18"><svg style="left:1146px;top:6px;width:14px;height:14px"><use href="#rg"/></svg><span style="left:1168px">[190..200]</span><span class="ex" style="left:1550px">!</span><i class="b rd rb"></i><span class="rt" style="left:1618px">0%</span><b class="sc sr"></b><span style="left:1787px;color:#fff;font-weight:700;top:-1px">!</span><span style="left:1805px">0</span></div>
</div>
<div style="left:1137px;top:1016px;width:789px;height:1px;background:#fff"></div>
<div style="left:1137px;top:1017px;width:789px;height:33px;background:#d0d0d0"></div>
<div style="left:1137px;top:1050px;width:789px;height:3px;background:#f2f2f2"></div>
<span style="left:1167px;top:1023px;font-size:13px;color:#444;line-height:20px;white-space:nowrap">Showing 19 items</span>
</div>
</body></html>
